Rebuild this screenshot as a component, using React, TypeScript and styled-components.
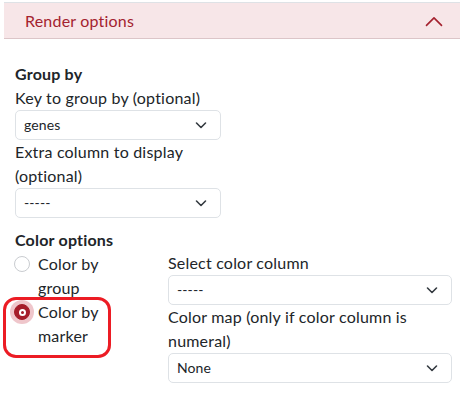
import React from "react";
import styled, { createGlobalStyle } from "styled-components";

const Global = createGlobalStyle`
  html, body { margin: 0; padding: 0; background: #fff; overflow: hidden; }
  body { font-family: Lato, "Open Sans", sans-serif; color: #212529; font-size: 16px; line-height: 24px; letter-spacing: 0.2px; }
`;

const Page = styled.div`
  width: 460px;
  height: 406px;
  padding-left: 4px;
  box-sizing: border-box;
  overflow: hidden;
  position: relative;
`;

const AccordionHeader = styled.div`
  margin-top: 2px;
  width: 458px;
  height: 37px;
  box-sizing: border-box;
  border-top: 1px solid #dee2e6;
  border-bottom: 1px solid #dcc5c8;
  background: #f7e6e8;
  color: #a4222f;
  display: flex;
  align-items: center;
  justify-content: space-between;
  padding: 0 18px 0 21px;
`;

const HeaderTitle = styled.span`
  font-size: 16px;
`;

const Body = styled.div`
  padding: 23px 0 0 11px;
`;

const Heading = styled.div<{ $mt?: number }>`
  font-weight: 700;
  line-height: 24px;
  margin-top: ${(p) => p.$mt ?? 0}px;
`;

const Label = styled.div<{ $w: number }>`
  width: ${(p) => p.$w}px;
  line-height: 24px;
`;

const SelectBox = styled.div<{ $w: number }>`
  width: ${(p) => p.$w}px;
  height: 30px;
  box-sizing: border-box;
  border: 1px solid #dee2e6;
  border-radius: 5px;
  display: flex;
  align-items: center;
  justify-content: space-between;
  padding: 0 13px 0 8px;
  font-size: 14px;
  letter-spacing: 0.1px;
  color: #212529;
  background: #fff;
`;

const ColorGrid = styled.div`
  display: grid;
  grid-template-columns: 153px 284px;
  align-items: start;
`;

const RadioList = styled.div`
  display: flex;
  flex-direction: column;
`;

const RadioRow = styled.div`
  display: flex;
  align-items: flex-start;
  gap: 8px;
  margin-left: -1px;
`;

const RadioCircle = styled.span<{ $checked?: boolean }>`
  flex: none;
  width: 16px;
  height: 16px;
  margin-top: 4px;
  border-radius: 50%;
  box-sizing: border-box;
  border: 1px solid ${(p) => (p.$checked ? "#a51d2a" : "#c9ccd0")};
  background: ${(p) => (p.$checked ? "#a51d2a" : "#fff")};
  box-shadow: ${(p) => (p.$checked ? "0 0 0 4px #efc6cb" : "none")};
  display: flex;
  align-items: center;
  justify-content: center;
  &::after {
    content: "";
    display: ${(p) => (p.$checked ? "block" : "none")};
    width: 7px;
    height: 7px;
    border-radius: 50%;
    border: 2px solid #fff;
    box-sizing: border-box;
  }
`;

const RadioLabel = styled.div`
  width: 80px;
  line-height: 24px;
`;

const RightCol = styled.div`
  margin-top: -1px;
`;

const Annotation = styled.div`
  position: absolute;
  left: 3px;
  top: 297px;
  width: 108px;
  height: 61px;
  box-sizing: border-box;
  border: 3.5px solid #ec1c24;
  border-radius: 13px;
  pointer-events: none;
`;

const Chevron = () => (
  <svg width="12" height="8" viewBox="0 0 12 8">
    <path d="M1.5 2l4.5 4.5L10.5 2" fill="none" stroke="#343a40" strokeWidth="1.6" strokeLinecap="round" strokeLinejoin="round" />
  </svg>
);

const Select = ({ w, value }: { w: number; value: string }) => (
  <SelectBox $w={w}>
    <span>{value}</span>
    <Chevron />
  </SelectBox>
);

export default function App() {
  return (
    <>
      <Global />
      <Page>
        <AccordionHeader>
          <HeaderTitle>Render options</HeaderTitle>
          <svg width="20" height="20" viewBox="0 0 16 16">
            <path d="M2 11.5L8 5.5L14 11.5" fill="none" stroke="#a4222f" strokeWidth="1.3" strokeLinecap="round" strokeLinejoin="round" />
          </svg>
        </AccordionHeader>
        <Body>
          <Heading>Group by</Heading>
          <Label $w={206}>Key to group by (optional)</Label>
          <Select w={206} value="genes" />
          <Label $w={206}>Extra column to display (optional)</Label>
          <Select w={206} value="-----" />
          <Heading $mt={10}>Color options</Heading>
          <ColorGrid>
            <RadioList>
              <RadioRow>
                <RadioCircle />
                <RadioLabel>Color by group</RadioLabel>
              </RadioRow>
              <RadioRow>
                <RadioCircle $checked />
                <RadioLabel>Color by marker</RadioLabel>
              </RadioRow>
            </RadioList>
            <RightCol>
              <Label $w={284}>Select color column</Label>
              <Select w={284} value="-----" />
              <Label $w={284}>Color map (only if color column is numeral)</Label>
              <Select w={284} value="None" />
            </RightCol>
          </ColorGrid>
        </Body>
        <Annotation />
      </Page>
    </>
  );
}
